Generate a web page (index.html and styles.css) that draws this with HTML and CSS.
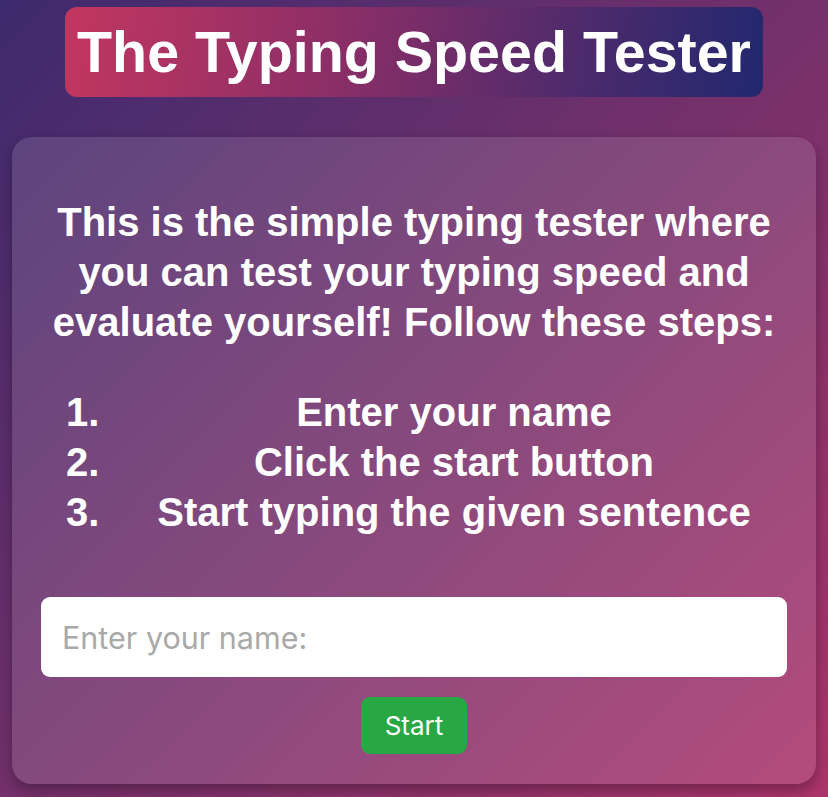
FILE: index.html
```html
<!DOCTYPE html>
<html lang="en">
<head>
<meta charset="utf-8">
<title>The Typing Speed Tester</title>
<link rel="stylesheet" href="styles.css">
</head>
<body>
  <header class="header">
    <h1 class="title">The Typing Speed Tester</h1>
  </header>
  <main class="card">
    <p class="intro">This is the simple typing tester where you can test your typing speed and evaluate yourself! Follow these steps:</p>
    <ol class="steps">
      <li class="step">Enter your name</li>
      <li class="step">Click the start button</li>
      <li class="step">Start typing the given sentence</li>
    </ol>
    <input class="name-input" type="text" placeholder="Enter your name:">
    <div class="actions">
      <button class="start-btn" type="button">Start</button>
    </div>
  </main>
</body>
</html>
```

FILE: styles.css
```css
html, body {
  height: 100%;
}

body {
  margin: 0;
  padding: 0 12px;
  box-sizing: border-box;
  background: linear-gradient(135deg, #3d2a6e 0%, #74306b 50%, #ab346a 100%);
  font-family: "Liberation Sans", Arial, sans-serif;
  color: #ffffff;
  overflow: hidden;
}

.header {
  display: flex;
  justify-content: center;
  padding-top: 7px;
}

.title {
  margin: 0;
  height: 90px;
  padding: 0 12px;
  display: flex;
  align-items: center;
  border-radius: 12px;
  background: linear-gradient(100deg, #c3365f 0%, #8a2e67 40%, #4a2a6c 75%, #21286f 100%);
  font-size: 57.4px;
  font-weight: 700;
  line-height: 64px;
  white-space: nowrap;
}

.card {
  display: block;
  margin-top: 40px;
  padding: 20px 29px 30px;
  border-radius: 20px;
  background: rgba(255, 255, 255, 0.12);
  box-shadow: 0 6px 14px rgba(0, 0, 0, 0.3);
}

.intro {
  margin: 40px 0;
  font-size: 40px;
  line-height: 50px;
  font-weight: 700;
  text-align: center;
}

.steps {
  margin: 40px 0 60px;
  padding: 0;
  list-style: none;
  counter-reset: step;
  font-size: 40px;
  line-height: 50px;
  font-weight: 700;
}

.step {
  display: grid;
  grid-template-columns: 80px 1fr;
  text-align: center;
  counter-increment: step;
}

.step::before {
  content: counter(step) ".";
  padding-left: 25px;
  text-align: left;
}

.name-input {
  display: block;
  width: 100%;
  height: 80px;
  box-sizing: border-box;
  border: none;
  border-radius: 9px;
  padding: 0 21px;
  background: #ffffff;
  font-family: Inter, "Noto Sans", sans-serif;
  font-size: 30.5px;
  color: #333333;
  outline: none;
}

.name-input::placeholder {
  color: #a9a9a9;
}

.actions {
  display: flex;
  justify-content: center;
  margin-top: 20px;
}

.start-btn {
  width: 106px;
  height: 57px;
  border: none;
  border-radius: 9px;
  background: #28a745;
  color: #ffffff;
  font-family: Inter, "Noto Sans", sans-serif;
  font-size: 26px;
  padding: 0;
}
```
